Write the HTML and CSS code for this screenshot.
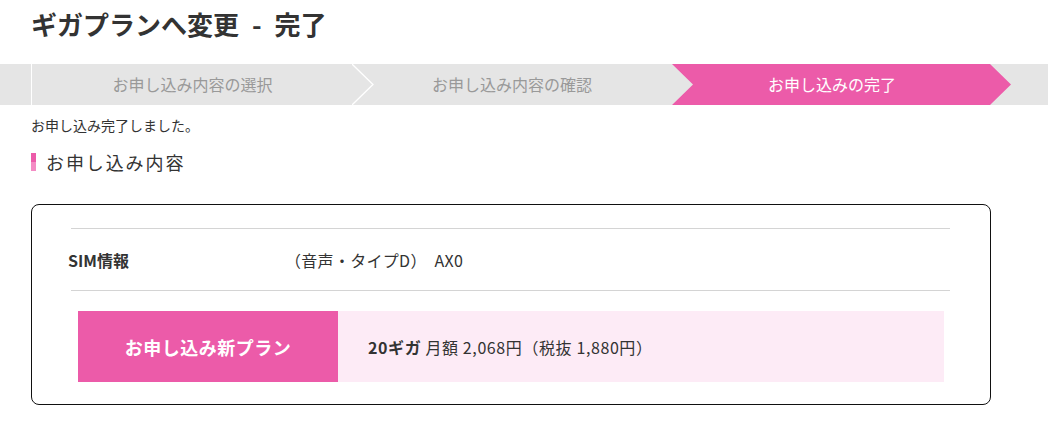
FILE: index.html
```html
<!DOCTYPE html>
<html lang="ja">
<head>
<meta charset="utf-8">
<title>ギガプランへ変更 - 完了</title>
<link rel="stylesheet" href="styles.css">
</head>
<body>
<h1 class="title">ギガプランへ変更 - 完了</h1>
<div class="steps">
  <div class="step step-first">お申し込み内容の選択</div>
  <div class="step">
    <svg class="chevron" width="23" height="41" viewBox="0 0 23 41"><polyline points="0,0 21,20.5 0,41" fill="none" stroke="#ffffff" stroke-width="1.3"/></svg>
    お申し込み内容の確認
  </div>
  <div class="step step-current">お申し込みの完了</div>
</div>
<div class="content">
  <p class="message">お申し込み完了しました。</p>
  <h2 class="section-heading"><span class="heading-bar"></span>お申し込み内容</h2>
  <div class="card">
    <div class="info-row">
      <div class="info-label">SIM情報</div>
      <div class="info-value">（音声・タイプD）  AX0</div>
    </div>
    <div class="plan">
      <div class="plan-label">お申し込み新プラン</div>
      <div class="plan-value"><strong>20ギガ</strong> 月額 2,068円（税抜 1,880円）</div>
    </div>
  </div>
</div>
</body>
</html>
```
FILE: styles.css
```css
body {
  margin: 0;
  font-family: "Noto Sans CJK JP", "Noto Sans", sans-serif;
  color: #333;
  background: #fff;
}
.title {
  margin: 0;
  padding: 6px 31px 0;
  font-size: 26px;
  line-height: 36px;
  font-weight: bold;
  word-spacing: 7px;
  color: #333;
}
.steps {
  margin-top: 22px;
  height: 41px;
  background: #e5e5e5;
  display: flex;
  padding-left: 31px;
}
.step {
  position: relative;
  width: 320px;
  flex: none;
  line-height: 41px;
  text-align: center;
  font-size: 16px;
  color: #999;
}
.step-first {
  width: 321px;
  border-left: 1px solid #fff;
  box-sizing: border-box;
  padding-left: 1px;
}
.chevron {
  position: absolute;
  left: 0;
  top: 0;
}
.step-current {
  width: 340px;
  padding-right: 20px;
  box-sizing: border-box;
  background: #ec5ba9;
  color: #fff;
  clip-path: polygon(0 0, 318px 0, 339px 50%, 318px 100%, 0 100%, 21px 50%);
}
.content {
  padding: 0 31px;
  width: 960px;
}
.message {
  margin: 10px 0 0;
  font-size: 14px;
  line-height: 21px;
}
.section-heading {
  margin: 17px 0 0;
  display: flex;
  align-items: center;
  font-size: 18px;
  line-height: 18px;
  font-weight: normal;
  letter-spacing: 1.9px;
  color: #333;
}
.heading-bar {
  width: 5px;
  height: 18px;
  margin-right: 10px;
  background: linear-gradient(#ec5ba9 0 50%, #f48cc4 50% 100%);
}
.card {
  margin-top: 33px;
  border: 1px solid #111;
  border-radius: 8px;
  padding: 23px 40px 22px 39px;
}
.info-row {
  display: flex;
  align-items: center;
  height: 61px;
  border-top: 1px solid #d4d4d4;
  border-bottom: 1px solid #d4d4d4;
  font-size: 16px;
}
.info-label {
  width: 217px;
  margin-left: -3px;
  font-weight: bold;
}
.info-value {
  white-space: pre;
  letter-spacing: 0.3px;
}
.plan {
  display: flex;
  height: 71px;
  margin: 20px 6px 0 7px;
}
.plan-label {
  width: 260px;
  flex: none;
  background: #ec5ba9;
  color: #fff;
  font-weight: bold;
  font-size: 18px;
  letter-spacing: 0.5px;
  display: flex;
  align-items: center;
  justify-content: center;
}
.plan-value {
  flex: 1;
  background: #fdebf6;
  display: flex;
  align-items: center;
  padding-left: 30px;
  font-size: 16px;
  letter-spacing: 0.6px;
  white-space: pre;
}
.plan-value strong {
  font-weight: bold;
}
```
